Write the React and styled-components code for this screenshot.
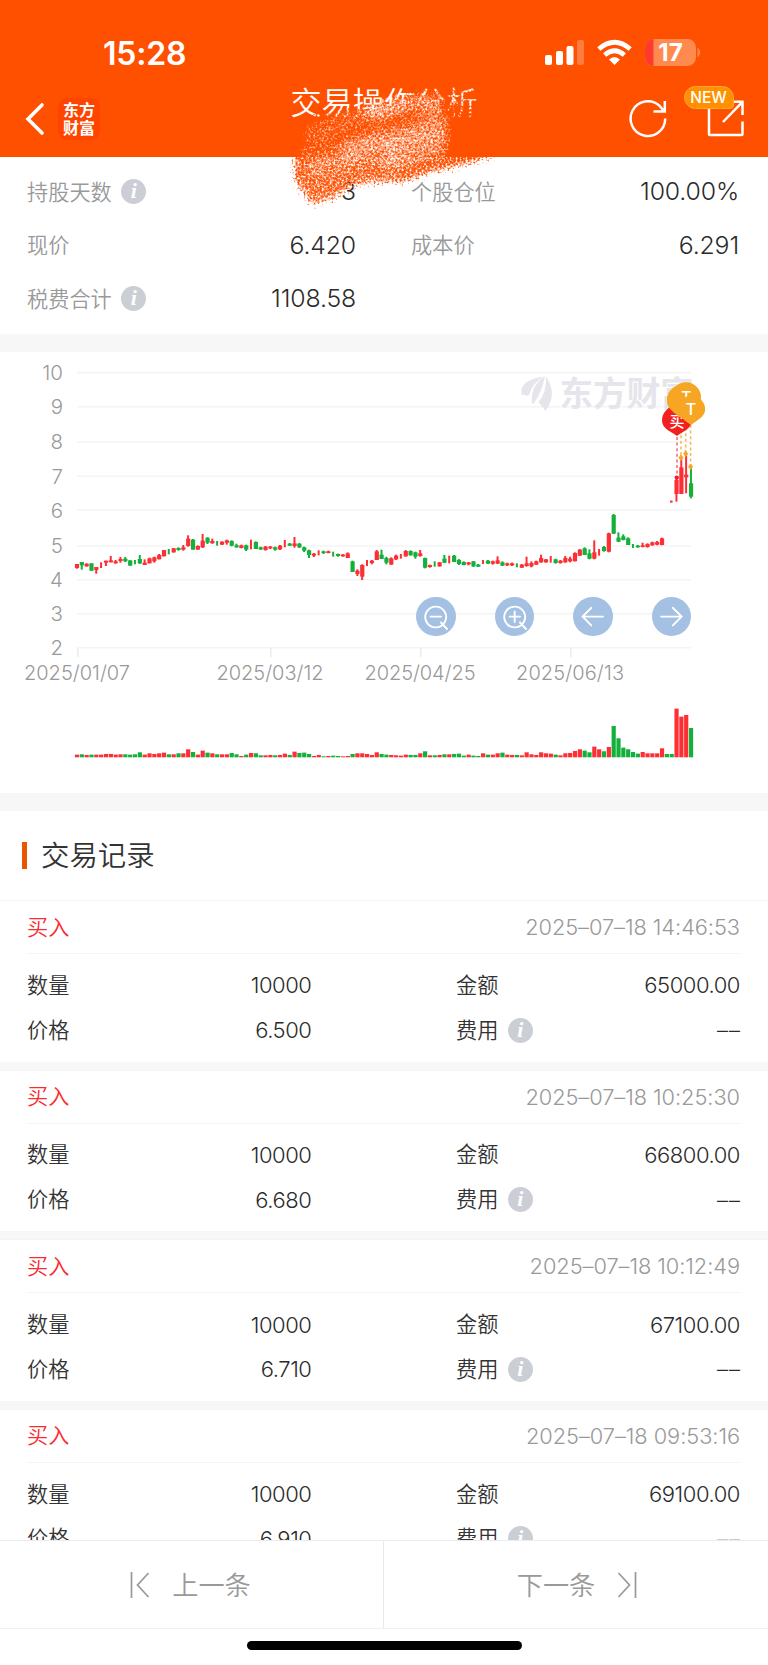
import React from "react";
import styled, { createGlobalStyle } from "styled-components";

const RED = "#fd2f35";
const GREEN = "#14b03c";

const GlobalStyle = createGlobalStyle`
  * {
    box-sizing: border-box;
  }
  body {
    margin: 0;
    background: #fff;
    font-family: Inter, "Noto Sans CJK SC", sans-serif;
    color: #333;
  }
`;

const Page = styled.div`
  position: relative;
  display: flex;
  flex-direction: column;
  width: 768px;
  height: 1665px;
  overflow: hidden;
  background: #fff;
`;

const Header = styled.header`
  flex: none;
  height: 157px;
  background: #ff5000;
  color: #fff;
`;

const StatusBar = styled.div`
  display: flex;
  justify-content: space-between;
  height: 80px;
  padding: 33px 66px 0 103px;
  & > svg {
    margin-top: 4px;
  }
`;

const Clock = styled.span`
  font-size: 32px;
  font-weight: 600;
  line-height: 41px;
  letter-spacing: -0.2px;
`;

const NavBar = styled.div`
  display: grid;
  grid-template-columns: 200px 1fr 200px;
  height: 77px;
`;

const NavLeft = styled.div`
  display: flex;
  align-items: center;
  padding-left: 25px;
`;

const Brand = styled.div`
  display: flex;
  flex-direction: column;
  align-items: center;
  justify-content: center;
  width: 42px;
  height: 42px;
  margin-left: 13px;
  border-radius: 9px;
  background: #ff4400;
  font-size: 16px;
  font-weight: 700;
  line-height: 18px;
`;

const Title = styled.h1`
  margin: 0;
  font-size: 31.2px;
  font-weight: 350;
  line-height: 46px;
  text-align: center;
  white-space: nowrap;
`;

const NavRight = styled.div`
  position: relative;
  display: flex;
  justify-content: flex-end;
  align-items: center;
  gap: 38.5px;
  padding-right: 24px;
`;

const NewBadge = styled.span`
  position: absolute;
  top: 6px;
  left: 115.5px;
  width: 50px;
  height: 23px;
  border: 1px solid #ffa733;
  border-radius: 12px 12px 4px 12px;
  background: #ff9100;
  font-size: 15.5px;
  font-weight: 450;
  line-height: 22px;
  text-align: center;
`;

const Stats = styled.section`
  flex: none;
  display: grid;
  grid-template-columns: 329px 328px;
  grid-auto-rows: 53.6px;
  column-gap: 55px;
  height: 177px;
  padding: 7.5px 28px 0 27px;
`;

const Pair = styled.div`
  display: flex;
  align-items: center;
  justify-content: space-between;
`;

const InfoDot = styled.span`
  width: 25px;
  height: 25px;
  background: #cbced5;
  border-radius: 50%;
  color: #fff;
  font: italic 700 22px/23px "Liberation Serif", serif;
  text-align: center;
`;

const Label = styled.span`
  display: flex;
  align-items: center;
  gap: 9.5px;
  padding-bottom: ${p => (p.dark ? "4px" : "2px")};
  color: ${p => (p.dark ? "#333" : "#999")};
  font-size: 21.2px;
  font-weight: 350;
  & > ${InfoDot} {
    margin-bottom: ${p => (p.dark ? "-4px" : "-2px")};
  }
`;

const Value = styled.span`
  color: #2b2b2b;
  font-size: ${p => (p.small ? "22px" : "24.8px")};
  font-weight: 350;
  letter-spacing: ${p => (p.small ? "-0.45px" : "-0.15px")};
`;

const EmptyValue = styled(Value)`
  letter-spacing: 1px;
  margin-right: -1px;
`;

const Band = styled.div`
  flex: none;
  height: ${p => p.size}px;
  background: #f7f7f7;
`;

const ChartPanel = styled.section`
  position: relative;
  flex: none;
  height: 441px;
  & > svg {
    display: block;
  }
`;

const Controls = styled.div`
  position: absolute;
  top: 244.7px;
  left: 416.3px;
  display: flex;
  gap: 39.2px;
`;

const RoundButton = styled.button`
  width: 39.4px;
  height: 39.4px;
  padding: 0;
  border: 0;
  border-radius: 50%;
  background: #a4c1e4;
`;

const SectionTitle = styled.h2`
  flex: none;
  display: flex;
  align-items: center;
  gap: 14px;
  height: 89px;
  margin: 0;
  padding: 0 0 4px 22px;
  font-size: 28.4px;
  font-weight: 350;
  &::before {
    content: "";
    width: 5px;
    height: 27px;
    margin-bottom: -4px;
    background: #ea5504;
  }
`;

const Records = styled.div`
  flex: 1;
  min-height: 0;
  overflow: hidden;
`;

const Record = styled.article`
  height: 169.6px;
  padding: 0 28px 0 27px;
  border-top: 1px solid #f4f4f4;
  border-bottom: 8.6px solid #f7f7f7;
`;

const RecordHead = styled.div`
  display: flex;
  align-items: center;
  justify-content: space-between;
  height: 53px;
  border-bottom: 1px solid #f4f4f4;
`;

const Side = styled.span`
  padding-bottom: 4px;
  color: #fb2b30;
  font-size: 21.2px;
  font-weight: 350;
`;

const Time = styled.time`
  color: #999;
  font-size: 21.8px;
  font-weight: 330;
  letter-spacing: -0.05px;
`;

const RecordBody = styled.div`
  display: grid;
  grid-template-columns: 284.5px 284px;
  grid-auto-rows: 44.8px;
  column-gap: 144.5px;
  padding-top: 9px;
`;

const Footer = styled.footer`
  flex: none;
  display: flex;
  height: 89px;
  border-top: 1px solid #ececee;
  border-bottom: 1px solid #f1f1f3;
`;

const PagerButton = styled.div`
  width: 50%;
  display: flex;
  align-items: center;
  justify-content: center;
  gap: 22px;
  padding: ${p => (p.divided ? "0 2px 2px 0" : "0 0 2px 2px")};
  border-right: ${p => (p.divided ? "1px solid #e9e9ec" : "0")};
  color: #999;
  font-size: 26.2px;
  font-weight: 350;
  & > svg {
    margin-bottom: -2px;
  }
`;

const HomeArea = styled.div`
  flex: none;
  display: flex;
  justify-content: center;
  height: 36px;
  padding-top: 12px;
`;

const HomeBar = styled.div`
  width: 275px;
  height: 9px;
  border-radius: 5px;
  background: #000;
`;

const BrushLayer = styled.svg`
  position: absolute;
  top: 70px;
  left: 270px;
  pointer-events: none;
`;

// side, high, low, body top, body bottom, volume
const candles = [
  "R 642 656 642 654 8", "G 636 659 636 646 9", "R 640 650 641 649 7", "G 640 662 640 662 8",
  "R 651 671 651 660 8", "R 637 654 0 0 8", "R 632 648 632 638 10", "R 618 637 631 637 10",
  "R 630 641 634 640 8", "R 621 638 627 633 9", "G 621 636 626 634 9", "G 631 647 631 647 8",
  "G 630 643 0 0 9", "G 615 642 627 640 15", "R 628 645 638 645 8", "R 623 640 625 640 12",
  "R 620 638 622 634 10", "R 612 628 615 628 12", "R 600 619 600 619 14", "G 597 613 0 0 9",
  "R 594 608 595 607 9", "G 592 602 594 600 12", "R 585 602 592 599 12", "R 556 590 566 588 24",
  "G 567 599 569 599 16", "R 586 599 588 599 8", "R 552 594 572 592 20", "G 562 582 563 578 14",
  "R 566 581 573 580 12", "G 573 587 0 0 9", "R 574 585 575 584 9", "R 569 584 571 578 9",
  "G 571 589 573 587 13", "G 581 593 586 592 9", "R 584 595 586 594 4", "G 584 603 586 599 8",
  "R 569 598 0 0 13", "G 574 597 576 597 12", "G 590 600 592 598 6", "R 588 602 590 600 6",
  "R 588 597 590 595 7", "G 590 602 592 599 6", "R 585 600 587 598 7", "R 570 592 0 0 11",
  "G 579 588 581 587 7", "R 561 593 580 588 17", "G 579 594 581 592 13", "G 590 606 592 602 14",
  "G 599 624 601 615 10", "R 609 621 611 617 4", "R 601 616 0 0 7", "G 602 612 604 609 3",
  "R 602 610 604 609 4", "G 605 620 0 0 5", "G 611 620 612 618 4", "R 612 620 614 619 3",
  "R 607 624 610 624 4", "G 632 666 634 666 10", "R 658 678 662 672 12", "R 643 690 645 680 12",
  "R 630 648 0 0 10", "R 630 643 632 639 7", "R 600 630 604 630 15", "G 599 627 614 627 10",
  "G 620 643 624 638 8", "R 622 644 625 644 7", "R 614 630 617 628 6", "R 612 626 0 0 5",
  "R 600 620 603 619 8", "G 601 617 603 616 7", "G 605 626 607 620 7", "R 600 620 610 618 12",
  "G 623 655 624 653 18", "R 644 653 645 651 6", "G 634 650 0 0 6", "R 636 650 637 649 7",
  "G 615 639 626 638 9", "R 617 640 0 0 9", "G 615 636 617 636 10", "G 627 645 630 642 11",
  "G 634 646 636 645 5", "R 636 646 637 643 8", "G 633 651 634 649 5", "G 642 651 644 650 4",
  "R 630 642 0 0 12", "G 630 642 632 641 8", "R 632 644 634 641 8", "R 619 642 631 641 12",
  "G 634 648 637 647 14", "R 638 648 640 646 8", "R 638 648 640 646 7", "G 640 652 0 0 7",
  "R 642 654 644 653 6", "R 620 650 640 648 15", "R 634 652 639 649 9", "R 632 645 634 644 7",
  "R 614 638 624 637 15", "R 627 638 628 637 12", "R 618 638 0 0 11", "G 626 641 628 639 8",
  "R 630 641 632 639 6", "R 618 638 624 637 12", "R 620 637 626 634 13", "R 607 634 609 634 19",
  "R 597 618 599 617 24", "G 592 615 595 615 20", "G 598 628 610 626 15", "R 571 628 607 626 32",
  "R 597 617 0 0 24", "G 588 605 591 603 18", "R 548 607 550 605 31", "G 492 552 495 551 94",
  "G 547 576 563 575 57", "G 553 571 559 570 29", "G 562 585 565 585 24", "G 582 594 0 0 16",
  "G 585 593 587 592 11", "R 578 592 586 591 16", "R 580 593 582 591 12", "R 575 587 577 586 12",
  "R 573 586 576 584 12", "R 563 586 565 585 27", "G 0 0 0 0 10", "G 0 0 0 0 10",
  "R 385 455 390 432 146", "R 325 432 352 432 122", "R 312 430 374 382 127", "G 350 445 400 440 88"
].map(row => {
  const [side, ...n] = row.split(" ");
  const [high, low, top, bottom, volume] = n.map(v => Number(v) / 3);
  return { color: side === "R" ? RED : GREEN, high, low, top, bottom, volume };
});

const gridLines = [20.6, 54.7, 90, 124.2, 158.2, 194, 227.8, 261.7, 295.7];
const dates = [
  { x: 77, width: 106, text: "2025/01/07" },
  { x: 270, width: 107, text: "2025/03/12" },
  { x: 420, width: 111, text: "2025/04/25" },
  { x: 570, width: 108, text: "2025/06/13" }
];

const records = [
  { time: "2025–07–18 14:46:53", price: "6.500", amount: "65000.00" },
  { time: "2025–07–18 10:25:30", price: "6.680", amount: "66800.00" },
  { time: "2025–07–18 10:12:49", price: "6.710", amount: "67100.00" },
  { time: "2025–07–18 09:53:16", price: "6.910", amount: "69100.00" }
];

const StatusIcons = () => (
  <svg width="160" height="32" viewBox="542 36 160 32">
    <g fill="#fff">
      <rect x="545" y="54" width="7" height="10" rx="2" />
      <rect x="556" y="50" width="7" height="14" rx="2" />
      <rect x="566.5" y="45" width="7" height="19" rx="2" />
      <rect x="577" y="39" width="7" height="25" rx="2" opacity=".25" />
      <path d="M614.5 64 L609 58.5 Q614.5 53.5 620 58.5 Z" />
    </g>
    <path d="M604.6 54 Q614.5 45.5 624.4 54" fill="none" stroke="#fff" strokeWidth="4.6" />
    <path d="M598.8 48 Q614.5 34.5 630.2 48" fill="none" stroke="#fff" strokeWidth="4.8" />
    <rect x="645" y="38" width="51" height="27" rx="8.5" fill="#ff8a50" />
    <path d="M653.5 38 v27 a8.5 8.5 0 0 1 -8.5 -8.5 v-10 a8.5 8.5 0 0 1 8.5 -8.5z" fill="#ff3b30" />
    <path d="M698 47.5 q3.5 4 0 8z" fill="#ff8a50" stroke="#ff8a50" />
    <text x="670.5" y="60.2" fill="#fff" fontSize="24" fontWeight="700" textAnchor="middle">17</text>
  </svg>
);

const Chart = () => (
  <svg width="768" height="441" viewBox="0 0 768 441">
    {gridLines.map((y, i) => (
      <g key={y}>
        <path d={`M77 ${y}H691`} stroke="#f4f4f5" strokeWidth="1.6" />
        <text x="63" y={y + 7.4} fill="#999" fontSize="20.5" fontWeight="330" textAnchor="end">
          {10 - i}
        </text>
      </g>
    ))}
    {dates.map(({ x, width, text }) => (
      <g key={text}>
        <path d={`M${x + 0.8} 296v9`} stroke="#ececee" strokeWidth="1.6" />
        <text x={x} y="327.5" fill="#999" fontSize="20" fontWeight="330" textLength={width} textAnchor="middle">
          {text}
        </text>
      </g>
    ))}
    <g fill="#e5e5eb">
      <path d="M521.5 37 Q525 27 544 24.5 Q532 31 529 43 L527 44 Q524 42 521.5 43z" />
      <path d="M545 24.5 Q541 42 534 51 L532 52 Q530 33 545 24.5z" />
      <path d="M546 24.5 Q558 42 545.5 59 L538.5 50 Q547 40 546 24.5z" />
      <text x="559.5" y="53.5" fontSize="33.6" fontWeight="700">东方财富</text>
    </g>
    {candles.map((c, i) => {
      const x = 77 + i * 4.835;
      return (
        <g key={i} fill={c.color}>
          {c.low > 0 && <rect x={x - 1.1} y={c.high - 2} width="2" height={c.low - c.high} />}
          {c.top > 0 && <rect x={x - 2.1} y={c.top - 2} width="4.2" height={c.bottom - c.top} />}
          <rect x={x - 2.1} y={405.3 - c.volume} width="4.2" height={c.volume} />
        </g>
      );
    })}
    <rect x="670" y="148.6" width="2.6" height="2" fill={RED} />
    <g fill="none" strokeWidth="1.5" strokeDasharray="3 2.6">
      <path d="M677 85V124" stroke="#f3696d" />
      <path d="M681 72V105M685.7 70V100M690.6 73V113" stroke="#f7b74f" />
    </g>
    <path
      d="M681 103l2 2.7-2 2.8-2-2.8zM685.7 99l2 2.7-2 2.8-2-2.8zM690.6 112l2 2.7-2 2.8-2-2.8z"
      fill="#f6a623"
      stroke="#f6a623"
    />
    <circle cx="676.8" cy="125.6" r="2.2" fill="#f32020" />
    <path d="M677 84 C672 80 662 77 662 68.5 A14.8 14.8 0 1 1 691.8 68.5 C691.8 77 682 80 677 84z" fill="#f32020" />
    <text x="677" y="74.5" fill="#fff" fontSize="15" fontWeight="500" textAnchor="middle">买</text>
    <path d="M681 66 C676 62 667 57 667 49.5 A14.6 14.6 0 0 1 676 34 A15 15 0 0 1 701 46 C701 56 690 62 681 66z" fill="#f6a623" />
    <text x="686.2" y="50.6" fill="#fff" fontSize="16" fontWeight="500" textAnchor="middle">T</text>
    <path d="M691 73 C686 69 677.7 65 677.7 57.5 A13.7 13.7 0 1 1 705.1 57.5 C705.1 65 696 69 691 73z" fill="#f6a623" />
    <text x="691" y="63.2" fill="#fff" fontSize="16.5" fontWeight="500" textAnchor="middle">T</text>
  </svg>
);

const controlPaths = [
  "M25 25.5l6 6.5M14.5 19.6h10.5M19.7 9.6a10.4 10.4 0 1 0 .01 0z",
  "M25 25.5l6 6.5M14.5 19.6h10.5M19.7 14.4v10.5M19.7 9.6a10.4 10.4 0 1 0 .01 0z",
  "M30 19.6H9.6M18.3 10.8L9.6 19.6l8.7 8.8",
  "M9.2 19.6h20.4M20.9 10.8l8.7 8.8-8.7 8.8"
];

// grainy brush strokes smeared over the title
const Brush = () => (
  <BrushLayer width="240" height="150" viewBox="270 70 240 150">
    <defs>
      <filter id="grainOrange" x="270" y="70" width="240" height="150" filterUnits="userSpaceOnUse" colorInterpolationFilters="sRGB">
        <feGaussianBlur in="SourceAlpha" stdDeviation="4" result="soft" />
        <feTurbulence type="fractalNoise" baseFrequency="0.5" numOctaves="3" seed="4" result="noise" />
        <feComposite in="soft" in2="noise" operator="arithmetic" k2="1" k3="1.9" k4="-1.45" />
        <feComponentTransfer result="grain">
          <feFuncA type="linear" slope="1.8" />
        </feComponentTransfer>
        <feComponentTransfer in="soft" result="area">
          <feFuncA type="linear" slope="8" intercept="-0.6" />
        </feComponentTransfer>
        <feFlood floodColor="#ff5000" />
        <feComposite in2="grain" operator="in" />
        <feComposite in2="area" operator="in" />
      </filter>
      <filter id="grainWhite" x="270" y="70" width="240" height="150" filterUnits="userSpaceOnUse" colorInterpolationFilters="sRGB">
        <feGaussianBlur in="SourceAlpha" stdDeviation="4" result="soft" />
        <feTurbulence type="fractalNoise" baseFrequency="0.45" numOctaves="3" seed="11" result="noise" />
        <feComposite in="soft" in2="noise" operator="arithmetic" k2="0.85" k3="1.9" k4="-1.12" />
        <feComponentTransfer result="grain">
          <feFuncA type="linear" slope="1.05" />
        </feComponentTransfer>
        <feComponentTransfer in="soft" result="area">
          <feFuncA type="linear" slope="6" intercept="-0.4" />
        </feComponentTransfer>
        <feFlood floodColor="#fff" />
        <feComposite in2="grain" operator="in" />
        <feComposite in2="area" operator="in" />
      </filter>
    </defs>
    <g filter="url(#grainOrange)">
      <path d="M300 117 L340 110 L380 106 L402 97 L440 98 L486 118 L495 157 L462 167 L430 174 L402 184 L372 184 L350 188 L334 200 L310 207 L304 194 L294 184 L293 160z" />
      <path d="M404 84H482V122H404z" opacity=".66" />
    </g>
    <g filter="url(#grainWhite)" fill="none" stroke="#000" strokeLinecap="round">
      <path d="M312 134 Q350 120 395 110" strokeWidth="18" opacity=".34" />
      <path d="M375 112 Q408 100 434 104" strokeWidth="18" opacity=".6" />
      <path d="M306 152 Q340 148 380 134" strokeWidth="14" opacity=".3" />
      <path d="M350 150 Q395 136 438 122" strokeWidth="20" opacity=".58" />
      <path d="M312 166 Q360 152 392 148" strokeWidth="12" opacity=".5" />
      <path d="M392 148 Q420 140 440 136" strokeWidth="18" opacity=".68" />
      <path d="M304 174 Q350 168 392 158" strokeWidth="10" opacity=".42" />
      <path d="M388 164 Q416 158 440 150" strokeWidth="14" opacity=".6" />
      <path d="M304 188 Q340 182 400 176" strokeWidth="10" opacity=".4" />
      <path d="M312 202 L334 196" strokeWidth="9" opacity=".45" />
    </g>
  </BrushLayer>
);

const Stat = ({ label, value, info, dark }) => (
  <Pair>
    <Label dark={dark}>
      {label}
      {info && <InfoDot>i</InfoDot>}
    </Label>
    {value ? <Value small={dark}>{value}</Value> : <EmptyValue small>––</EmptyValue>}
  </Pair>
);

export default () => (
  <Page>
    <GlobalStyle />
    <Header>
      <StatusBar>
        <Clock>15:28</Clock>
        <StatusIcons />
      </StatusBar>
      <NavBar>
        <NavLeft>
          <svg width="20" height="34" fill="none" stroke="#fff" strokeWidth="3.6" strokeLinecap="round">
            <path d="M17 3L3 17l14 14" />
          </svg>
          <Brand>
            <span>东方</span>
            <span>财富</span>
          </Brand>
        </NavLeft>
        <Title>交易操作分析</Title>
        <NavRight>
          <svg width="40" height="40" fill="none" stroke="#fff" strokeWidth="2.5">
            <path d="M37.2 19.5A17.3 17.3 0 1 1 31.5 6.8L36 12M36.8 2v10.5H25.5" />
          </svg>
          <svg width="38" height="38" fill="none" stroke="#fff" strokeWidth="2.5">
            <path d="M3 5v29q0 1 1 1h31.5q1 0 1-1V21.5M36.5 15V1.8H22M36.5 1.8L17 22" />
          </svg>
          <NewBadge>NEW</NewBadge>
        </NavRight>
      </NavBar>
    </Header>
    <Stats>
      <Stat label="持股天数" value="3" info />
      <Stat label="个股仓位" value="100.00%" />
      <Stat label="现价" value="6.420" />
      <Stat label="成本价" value="6.291" />
      <Stat label="税费合计" value="1108.58" info />
    </Stats>
    <Band size={18} />
    <ChartPanel>
      <Chart />
      <Controls>
        {controlPaths.map(d => (
          <RoundButton key={d}>
            <svg width="39.4" height="39.4" fill="none" stroke="#fff" strokeWidth="1.9" strokeLinecap="round">
              <path d={d} />
            </svg>
          </RoundButton>
        ))}
      </Controls>
    </ChartPanel>
    <Band size={18} />
    <SectionTitle>交易记录</SectionTitle>
    <Records>
      {records.map(r => (
        <Record key={r.time}>
          <RecordHead>
            <Side>买入</Side>
            <Time>{r.time}</Time>
          </RecordHead>
          <RecordBody>
            <Stat dark label="数量" value="10000" />
            <Stat dark label="金额" value={r.amount} />
            <Stat dark label="价格" value={r.price} />
            <Stat dark label="费用" info />
          </RecordBody>
        </Record>
      ))}
    </Records>
    <Footer>
      <PagerButton divided>
        <svg width="20" height="26" fill="none" stroke="#999" strokeWidth="1.7">
          <path d="M1.5 0v26M18.5 1L7.5 13l11 12" />
        </svg>
        上一条
      </PagerButton>
      <PagerButton>
        下一条
        <svg width="20" height="26" fill="none" stroke="#999" strokeWidth="1.7">
          <path d="M18.5 0v26M1.5 1l11 12-11 12" />
        </svg>
      </PagerButton>
    </Footer>
    <HomeArea>
      <HomeBar />
    </HomeArea>
    <Brush />
  </Page>
);
